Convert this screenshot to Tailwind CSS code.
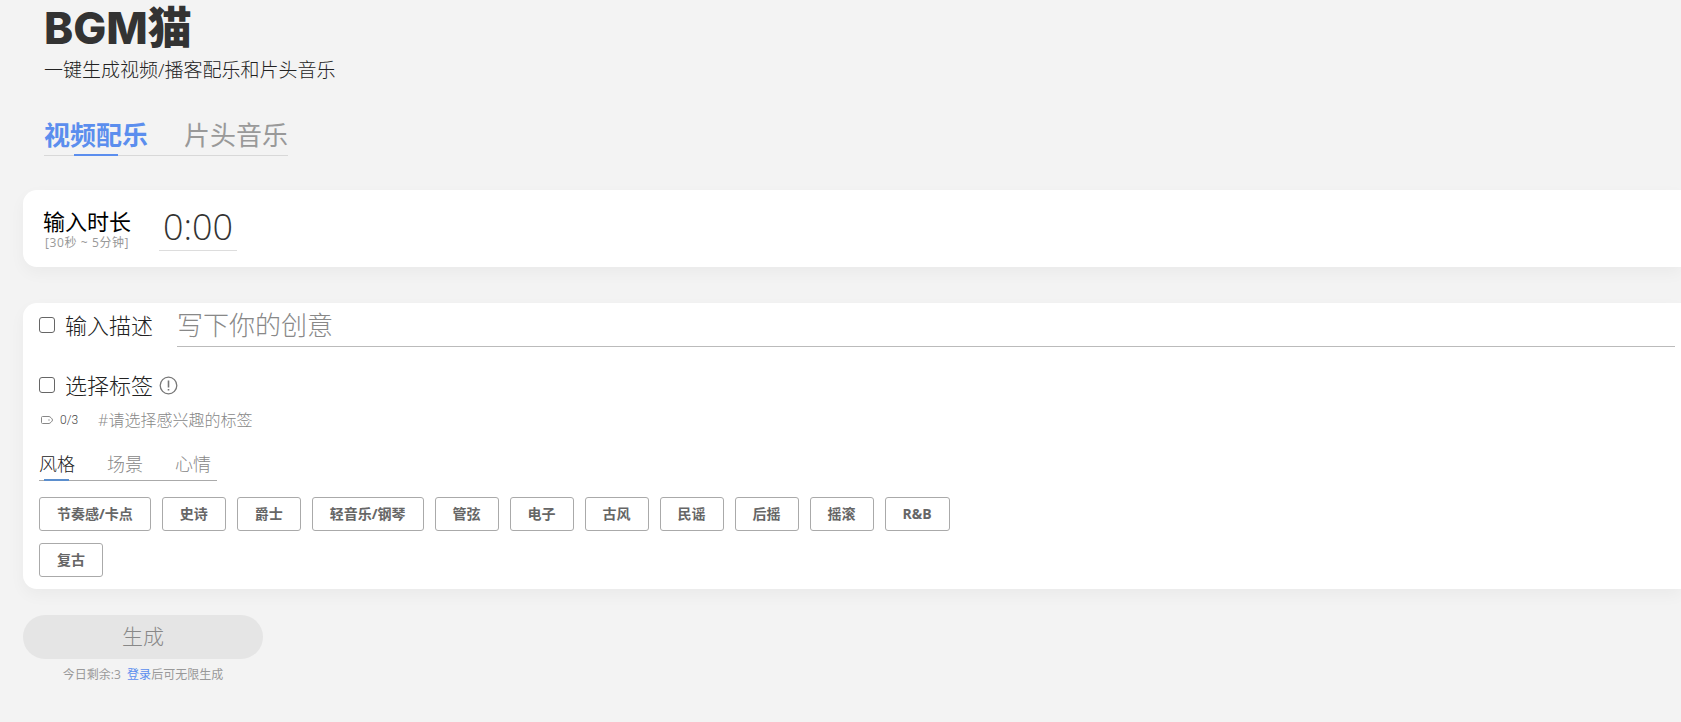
<!DOCTYPE html>
<html lang="zh-CN">
<head>
  <meta charset="UTF-8">
  <meta name="viewport" content="width=device-width, initial-scale=1.0">
  <title>BGM猫</title>
  <script src="https://cdn.jsdelivr.net/npm/@tailwindcss/browser@4"></script>
</head>
<body class="min-h-screen bg-[#f3f3f3] font-['Open_Sans','Noto_Sans_CJK_SC',sans-serif] font-light text-[#222]">
  <header class="pl-11 pt-2">
    <h1 class="text-[44px] leading-10 font-extrabold text-[#333] font-['Inter','Noto_Sans_CJK_SC',sans-serif]">BGM猫</h1>
    <p class="mt-2 text-[19px] leading-7">一键生成视频/播客配乐和片头音乐</p>
    <nav class="mt-[33px] inline-flex gap-9 border-b border-[#d8d8d8] text-[26px] leading-9">
      <a href="#video" class="relative pb-0.5 font-bold text-[#5b8eee]">视频配乐
        <span class="absolute -bottom-px left-[30px] h-0.5 w-11 bg-[#5b8eee]"></span>
      </a>
      <a href="#intro" class="pb-0.5 font-normal text-[#999]">片头音乐</a>
    </nav>
  </header>

  <main class="pl-[23px]">
    <!-- Duration -->
    <section class="mt-[34px] flex h-[77px] items-center gap-7 rounded-l-[14px] bg-white pl-5 shadow-[0_6px_16px_rgba(0,0,0,0.04)]">
      <label for="duration" class="pt-1 text-[22px] leading-6 text-black font-normal">输入时长
        <span class="block pl-0.5 text-xs leading-5 tracking-wider text-[#999]">[30秒 ~ 5分钟]</span>
      </label>
      <input id="duration" type="text" value="0:00" class="h-11 w-[78px] border-b border-[#ddd] pb-1 text-center text-4xl font-light text-[#333] outline-none">
    </section>

    <!-- Description and tags -->
    <section class="mt-9 rounded-l-[14px] bg-white pb-3 pl-4 shadow-[0_6px_16px_rgba(0,0,0,0.04)]">
      <div class="flex h-11 items-center pr-1.5">
        <input id="use-desc" type="checkbox" class="size-4 appearance-none rounded-[3px] border border-[#666]">
        <label for="use-desc" class="ml-2.5 text-[22px] leading-8">输入描述</label>
        <input type="text" aria-label="写下你的创意" placeholder="写下你的创意" class="ml-6 h-11 flex-1 border-b border-[#bbb] text-[26px] outline-none placeholder:text-[#888]">
      </div>
      <div class="mt-5 flex h-9 items-center">
        <input id="use-tags" type="checkbox" class="size-4 appearance-none rounded-[3px] border border-[#666]">
        <label for="use-tags" class="ml-2.5 text-[22px] leading-8">选择标签</label>
        <svg class="ml-1.5 size-[19px]" viewBox="0 0 19 19" fill="none" stroke="#777" stroke-width="1.3">
          <circle cx="9.5" cy="9.5" r="8.3" />
          <path d="M9.5 4.5v7M9.5 13v1.6" stroke-width="1.6" />
        </svg>
      </div>
      <div class="mt-px flex h-8 items-center">
        <svg class="ml-0.5 h-2.5 w-3" viewBox="0 0 12 10" fill="none" stroke="#888">
          <path d="M1.5 1.5h6.5c1 0 3.5 2.3 3.5 3.5S9 8.5 8 8.5H1.5c-.6 0-1-.4-1-1v-5c0-.6.4-1 1-1z" />
          <circle cx="8" cy="5" r=".7" fill="#888" stroke="none" />
        </svg>
        <span class="ml-[7px] font-['Roboto',sans-serif] text-xs text-[#444]">0/3</span>
        <span class="ml-5 text-base text-[#888]">#请选择感兴趣的标签</span>
      </div>
      <nav class="mt-3 inline-flex gap-8 border-b border-[#aaa] pr-1.5 text-lg leading-8 text-[#888]">
        <a href="#style" class="relative text-[#222]">风格
          <span class="absolute -bottom-px left-[5px] h-0.5 w-[25px] bg-[#5b8ecd]"></span>
        </a>
        <a href="#scene">场景</a>
        <a href="#mood">心情</a>
      </nav>
      <div class="mt-4 flex max-w-[960px] flex-wrap gap-x-[11px] gap-y-3 text-sm font-bold text-[#666]">
        <button type="button" class="h-[34px] rounded-[3px] border border-[#aaa] px-[17px]">节奏感/卡点</button>
        <button type="button" class="h-[34px] rounded-[3px] border border-[#aaa] px-[17px]">史诗</button>
        <button type="button" class="h-[34px] rounded-[3px] border border-[#aaa] px-[17px]">爵士</button>
        <button type="button" class="h-[34px] rounded-[3px] border border-[#aaa] px-[17px]">轻音乐/钢琴</button>
        <button type="button" class="h-[34px] rounded-[3px] border border-[#aaa] px-[17px]">管弦</button>
        <button type="button" class="h-[34px] rounded-[3px] border border-[#aaa] px-[17px]">电子</button>
        <button type="button" class="h-[34px] rounded-[3px] border border-[#aaa] px-[17px]">古风</button>
        <button type="button" class="h-[34px] rounded-[3px] border border-[#aaa] px-[17px]">民谣</button>
        <button type="button" class="h-[34px] rounded-[3px] border border-[#aaa] px-[17px]">后摇</button>
        <button type="button" class="h-[34px] rounded-[3px] border border-[#aaa] px-[17px]">摇滚</button>
        <button type="button" class="h-[34px] rounded-[3px] border border-[#aaa] px-[17px]">R&amp;B</button>
        <button type="button" class="h-[34px] rounded-[3px] border border-[#aaa] px-[17px]">复古</button>
      </div>
    </section>

    <!-- Generate -->
    <div class="mt-[26px] w-60 text-center">
      <button type="button" class="h-11 w-full rounded-full bg-[#e5e5e5] text-[21px] text-[#888]">生成</button>
      <p class="mt-1.5 text-xs leading-5 font-normal text-[#999]">今日剩余:3&nbsp; <a href="#login" class="text-[#5b8eee]">登录</a>后可无限生成</p>
    </div>
  </main>
</body>
</html>
